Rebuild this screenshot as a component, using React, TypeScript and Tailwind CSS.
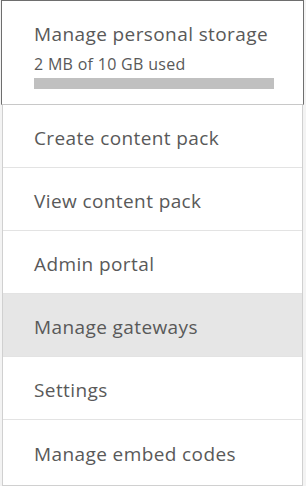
import React from "react";

const items = [
  "Create content pack",
  "View content pack",
  "Admin portal",
  "Manage gateways",
  "Settings",
  "Manage embed codes",
];

export default function App() {
  return (
    <div
      className="w-[306px] h-[486px] bg-[#f3f3f3] flex flex-col overflow-hidden"
      style={{ fontFamily: '"Open Sans", "Noto Sans", sans-serif' }}
    >
      <div className="ml-[1px] w-[303px] h-[105px] shrink-0 bg-white border border-[#6e6e6e] border-b-[#c8c8c8] pl-[32px] pt-[21px] flex flex-col">
        <div className="text-[19px] leading-[24px] tracking-[0.4px] text-[#595959]">Manage personal storage</div>
        <div className="text-[16px] leading-[20px] tracking-[0.3px] text-[#595959] mt-[8px]">2 MB of 10 GB used</div>
        <div className="mt-[4px] w-[240px] h-[11px] bg-[#c0c0c0]" />
      </div>
      <div className="ml-[2px] w-[301px] flex-1 bg-white border-l border-r border-b border-[#d0d0d0] flex flex-col">
        {items.map((t, i) => (
          <div
            key={t}
            className={
              "h-[63px] shrink-0 flex items-center pl-[31px] pt-[5px] text-[19px] tracking-[0.4px] text-[#595959] " +
              (i < items.length - 1 ? "border-b border-[#e3e3e3] " : "") +
              (t === "Manage gateways" ? "bg-[#e6e6e6]" : "")
            }
          >
            {t}
          </div>
        ))}
      </div>
    </div>
  );
}
